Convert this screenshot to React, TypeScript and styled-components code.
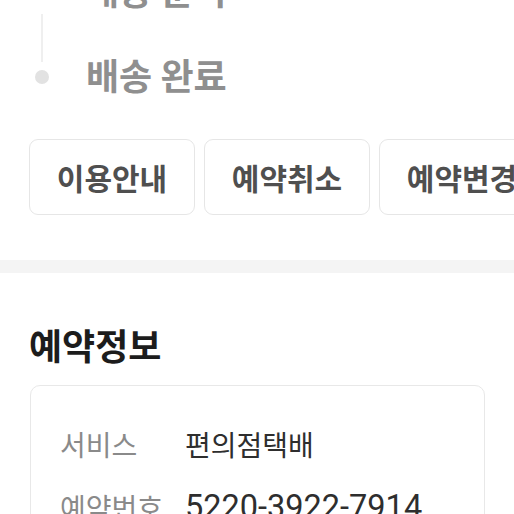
import React from "react";
import styled, { createGlobalStyle } from "styled-components";

const GlobalStyle = createGlobalStyle`
  html, body {
    margin: 0;
    padding: 0;
    background: #ffffff;
    overflow: hidden;
  }
  body {
    font-family: "Noto Sans CJK KR", "Noto Sans", sans-serif;
  }
`;

const Page = styled.div`
  width: 514px;
  display: flex;
  flex-direction: column;
`;

const Timeline = styled.ul`
  list-style: none;
  margin: -31px 0 0;
  padding: 0 0 0 29px;
  display: flex;
  flex-direction: column;
  gap: 45px;
`;

const Step = styled.li`
  display: flex;
  align-items: center;
  height: 40px;
`;

const Marker = styled.span<{ $connected: boolean }>`
  position: relative;
  width: 14px;
  height: 14px;
  margin: 6px 0 0 6px;
  border-radius: 50%;
  background: #e2e2e2;
  flex: none;

  &::before {
    content: "";
    display: ${(p) => (p.$connected ? "block" : "none")};
    position: absolute;
    left: 6px;
    bottom: 22px;
    width: 2px;
    height: 48px;
    background: #efefef;
  }
`;

const StepLabel = styled.span`
  margin-left: 37px;
  font-size: 36px;
  font-weight: 700;
  line-height: 40px;
  color: #8f8f8f;
`;

const ButtonRow = styled.div`
  display: flex;
  gap: 9px;
  margin-top: 45px;
  padding-left: 29px;
  overflow: hidden;
`;

const ActionButton = styled.button`
  flex: none;
  width: 166px;
  height: 76px;
  border: 1px solid #e6e6e6;
  border-radius: 9px;
  background: #ffffff;
  font-family: "Noto Sans CJK KR", sans-serif;
  font-size: 30px;
  font-weight: 700;
  color: #4f4f4f;
  padding: 0;
`;

const Divider = styled.div`
  height: 13px;
  margin-top: 45px;
  background: #f4f4f4;
`;

const Section = styled.section`
  padding: 0 29px 0 30px;
  display: flex;
  flex-direction: column;
`;

const Title = styled.h2`
  margin: 51px 0 0 -1px;
  font-size: 36px;
  font-weight: 700;
  line-height: 40px;
  color: #1c1c1c;
`;

const Card = styled.div`
  margin-top: 21px;
  border: 1px solid #e8e8e8;
  border-radius: 10px;
  padding: 40px 0 0 29px;
  display: flex;
  flex-direction: column;
  gap: 27px;
  height: 200px;
`;

const InfoRow = styled.div`
  display: grid;
  grid-template-columns: 125px 1fr;
  align-items: center;
  height: 36px;
`;

const Label = styled.span`
  font-size: 28px;
  color: #8a8a8a;
  line-height: 36px;
`;

const Value = styled.span<{ $numeric?: boolean }>`
  font-family: ${(p) =>
    p.$numeric ? `Roboto, "Noto Sans CJK KR", sans-serif` : `"Noto Sans CJK KR", sans-serif`};
  font-size: ${(p) => (p.$numeric ? "32.5px" : "28px")};
  color: #2e2e2e;
  line-height: 36px;
`;

const steps = ["배송 준비", "배송 완료"];
const actions = ["이용안내", "예약취소", "예약변경"];
const info: { label: string; value: string; numeric?: boolean }[] = [
  { label: "서비스", value: "편의점택배" },
  { label: "예약번호", value: "5220-3922-7914", numeric: true },
];

export default function App() {
  return (
    <>
      <GlobalStyle />
      <Page>
        <Timeline>
          {steps.map((s, i) => (
            <Step key={s}>
              <Marker $connected={i > 0} />
              <StepLabel>{s}</StepLabel>
            </Step>
          ))}
        </Timeline>
        <ButtonRow>
          {actions.map((a) => (
            <ActionButton key={a}>{a}</ActionButton>
          ))}
        </ButtonRow>
        <Divider />
        <Section>
          <Title>예약정보</Title>
          <Card>
            {info.map((r) => (
              <InfoRow key={r.label}>
                <Label>{r.label}</Label>
                <Value $numeric={r.numeric}>{r.value}</Value>
              </InfoRow>
            ))}
          </Card>
        </Section>
      </Page>
    </>
  );
}
